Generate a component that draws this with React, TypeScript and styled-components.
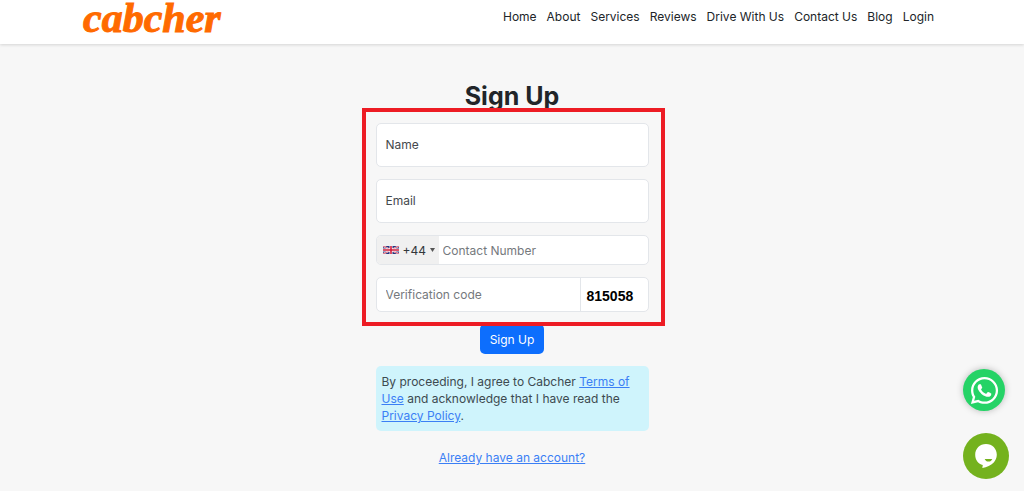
import React from "react";
import styled, { createGlobalStyle } from "styled-components";
import { FaWhatsapp } from "react-icons/fa";

const GlobalStyle = createGlobalStyle`
  *, *::before, *::after { box-sizing: border-box; }
  body {
    margin: 0;
    background: #f7f7f7;
    color: #212529;
    font-family: Inter, "Liberation Sans", sans-serif;
    font-size: 12px;
  }
  input, button, select { font-family: inherit; }
`;

const Header = styled.header`
  display: flex;
  align-items: flex-start;
  justify-content: space-between;
  height: 44px;
  padding: 0 90px 0 83px;
  background: #fff;
  box-shadow: 0 1px 3px rgba(0, 0, 0, 0.14);
`;

const Logo = styled.a`
  color: #ff6a00;
  font: italic 700 42px/36px "Liberation Serif", serif;
  -webkit-text-stroke: 1px #ff6a00;
  text-decoration: none;
`;

const Nav = styled.nav`
  display: flex;
  gap: 10px;
  padding-top: 8px;
`;

const NavLink = styled.a`
  color: #212529;
  font-size: 12px;
  line-height: 18px;
  text-decoration: none;
  white-space: nowrap;
`;

const Main = styled.main`
  display: flex;
  flex-direction: column;
  align-items: center;
  padding-top: 36px;
`;

const Title = styled.h1`
  margin: 0;
  font-size: 25px;
  font-weight: 700;
  line-height: 32px;
`;

const Form = styled.form`
  display: flex;
  flex-direction: column;
  align-items: center;
  gap: 12px;
  width: 273px;
  max-width: 100%;
  margin-top: 11px;
`;

const Fields = styled.div`
  position: relative;
  display: flex;
  flex-direction: column;
  gap: 12px;
  width: 100%;
`;

const Highlight = styled.div`
  position: absolute;
  inset: -15px -16px -14px -14px;
  border: 4px solid #ed1c24;
  pointer-events: none;
`;

const Field = styled.div<{ $height: number }>`
  position: relative;
  display: flex;
  height: ${(p) => p.$height}px;
  border: 1px solid #e3e6ea;
  border-radius: 5px;
  background: #fff;
  overflow: hidden;
`;

const FloatingLabel = styled.label`
  position: absolute;
  inset: 0;
  display: flex;
  align-items: center;
  padding: 0 0 2px 9px;
  color: #45494d;
  font-size: 12px;
  pointer-events: none;
`;

const Input = styled.input<{ $indent: number }>`
  flex: 1;
  min-width: 0;
  padding: 0 0 0 ${(p) => p.$indent}px;
  border: 0;
  outline: 0;
  background: transparent;
  color: #212529;
  font-size: 12px;
  &::placeholder { color: #75797d; opacity: 1; }
`;

const DialCode = styled.button`
  display: flex;
  align-items: center;
  gap: 4px;
  width: 62px;
  padding: 0 0 0 6px;
  border: 0;
  background: #f0f0f0;
  color: #33373b;
  font-size: 12px;
`;

const Captcha = styled.output`
  display: flex;
  align-items: center;
  width: 68px;
  padding: 3px 0 0 6px;
  border-left: 1px solid #e3e6ea;
  color: #000;
  font: 700 14px "Liberation Sans", sans-serif;
`;

const Submit = styled.button`
  height: 30px;
  padding: 0 10px;
  border: 0;
  border-radius: 5px;
  background: #0d6efd;
  color: #fff;
  font-size: 12px;
`;

const Notice = styled.p`
  width: 100%;
  margin: 0;
  padding: 7px 6px;
  border-radius: 5px;
  background: #cff4fc;
  color: #3d4a50;
  font-size: 12px;
  line-height: 17px;
`;

const TextLink = styled.a`
  color: #3b7ff5;
  text-decoration: underline;
`;

const AccountRow = styled.div`
  padding-top: 6px;
  line-height: 18px;
`;

const FloatingButtons = styled.aside`
  position: fixed;
  right: 15px;
  bottom: 12px;
  display: flex;
  flex-direction: column;
  align-items: center;
  gap: 22px;
`;

const RoundButton = styled.button<{ $size: number; $color: string; $shadow?: boolean }>`
  display: flex;
  align-items: center;
  justify-content: center;
  width: ${(p) => p.$size}px;
  height: ${(p) => p.$size}px;
  margin-right: ${(p) => (p.$shadow ? 4 : 0)}px;
  padding: 0;
  border: 0;
  border-radius: 50%;
  background: ${(p) => p.$color};
  color: #fff;
  box-shadow: ${(p) => (p.$shadow ? "0 0 7px rgba(0, 0, 0, 0.25)" : "none")};
`;

const links = ["Home", "About", "Services", "Reviews", "Drive With Us", "Contact Us", "Blog", "Login"];

const UnionFlag = () => (
  <svg width="16" height="8" viewBox="0 0 60 30" preserveAspectRatio="none" aria-hidden="true">
    <path fill="#28327c" d="M0 0h60v30H0z" />
    <path d="M0 0l60 30M60 0L0 30" stroke="#fff" strokeWidth="6" />
    <path d="M0 0l60 30M60 0L0 30" stroke="#d02040" strokeWidth="3" />
    <path d="M30 0v30M0 15h60" stroke="#fff" strokeWidth="11" />
    <path d="M30 0v30M0 15h60" stroke="#d01c3a" strokeWidth="6" />
  </svg>
);

const Caret = () => (
  <svg width="5" height="4" viewBox="0 0 5 4" aria-hidden="true">
    <path fill="#555" d="M0 0h5L2.5 4z" />
  </svg>
);

const ChatIcon = () => (
  <svg width="24" height="26" viewBox="0 0 24 26" aria-hidden="true">
    <path
      fill="#fff"
      d="M12 1C5.700 1 1.200 5.700 1.200 11.700c0 5.200 3.100 9.300 7.600 10.300L8.300 25c4.700-.9 8.700-2.700 11.200-5.300 2-2.100 3.300-5 3.300-8C22.800 5.700 18.300 1 12 1z"
    />
    <path fill="#74b21e" d="M10.700 16h7.600c-.6 1.700-2 2.600-3.800 2.600s-3.200-.9-3.800-2.600z" />
  </svg>
);

export default function App() {
  return (
    <>
      <GlobalStyle />
      <Header>
        <Logo href="#">cabcher</Logo>
        <Nav>
          {links.map((name) => (
            <NavLink key={name} href="#">{name}</NavLink>
          ))}
        </Nav>
      </Header>
      <Main>
        <Title>Sign Up</Title>
        <Form onSubmit={(e) => e.preventDefault()}>
          <Fields>
            <Field $height={44}>
              <Input id="name" type="text" $indent={9} />
              <FloatingLabel htmlFor="name">Name</FloatingLabel>
            </Field>
            <Field $height={44}>
              <Input id="email" type="email" $indent={9} />
              <FloatingLabel htmlFor="email">Email</FloatingLabel>
            </Field>
            <Field $height={30}>
              <DialCode type="button">
                <UnionFlag />
                +44
                <Caret />
              </DialCode>
              <Input type="tel" aria-label="Contact Number" placeholder="Contact Number" $indent={4} />
            </Field>
            <Field $height={35}>
              <Input type="text" aria-label="Verification code" placeholder="Verification code" $indent={9} />
              <Captcha>815058</Captcha>
            </Field>
            <Highlight />
          </Fields>
          <Submit type="submit">Sign Up</Submit>
          <Notice>
            By proceeding, I agree to Cabcher <TextLink href="#">Terms of Use</TextLink> and acknowledge
            that I have read the <TextLink href="#">Privacy Policy</TextLink>.
          </Notice>
          <AccountRow>
            <TextLink href="#">Already have an account?</TextLink>
          </AccountRow>
        </Form>
      </Main>
      <FloatingButtons>
        <RoundButton $size={42} $color="#25d366" $shadow aria-label="WhatsApp">
          <FaWhatsapp size={31} />
        </RoundButton>
        <RoundButton $size={46} $color="#74b21e" aria-label="Chat">
          <ChatIcon />
        </RoundButton>
      </FloatingButtons>
    </>
  );
}
